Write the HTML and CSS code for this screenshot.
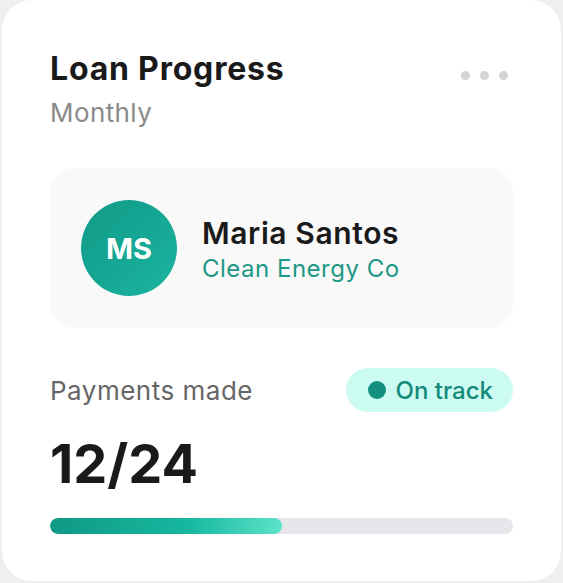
FILE: index.html
```html
<!DOCTYPE html>
<html lang="en">
<head>
  <meta charset="UTF-8">
  <title>Loan Progress</title>
  <link rel="stylesheet" href="styles.css">
</head>
<body>

  <div class="card">
    <div class="card-header">
      <div>
        <h2 class="title">Loan Progress</h2>
        <div class="subtitle">Monthly</div>
      </div>
      <button class="more" aria-label="More options">
        <span></span><span></span><span></span>
      </button>
    </div>

    <div class="borrower">
      <div class="avatar">MS</div>
      <div class="borrower-info">
        <div class="borrower-name">Maria Santos</div>
        <div class="borrower-company">Clean Energy Co</div>
      </div>
    </div>

    <div class="payments-row">
      <span class="payments-label">Payments made</span>
      <span class="badge"><span class="badge-dot"></span>On track</span>
    </div>

    <div class="payments-count">12/24</div>

    <div class="progress">
      <div class="progress-fill" style="width: 50%"></div>
    </div>
  </div>

</body>
</html>
```

FILE: styles.css
```css
body {
  font-family: 'Inter', 'Noto Sans', sans-serif;
  background: #efefef;
  margin: 0;
  padding: 0 2px;
  color: #1a1a1a;
}

.card {
  box-sizing: border-box;
  height: 581px;
  background: #ffffff;
  border-radius: 30px;
  padding: 51px 48px 0;
  display: flex;
  flex-direction: column;
}

.card-header {
  display: flex;
  justify-content: space-between;
  align-items: flex-start;
}

.title {
  margin: 0;
  font-size: 32px;
  line-height: 36px;
  font-weight: 700;
  letter-spacing: 0.8px;
  color: #1a1a1a;
}

.subtitle {
  margin-top: 11px;
  font-size: 26px;
  line-height: 30px;
  letter-spacing: 0.4px;
  color: #8a8a8a;
}

.more {
  display: flex;
  gap: 10px;
  background: none;
  border: none;
  padding: 0;
  margin: 20px 5px 0 0;
  cursor: pointer;
}

.more span {
  width: 9px;
  height: 9px;
  border-radius: 50%;
  background: #d4d4d4;
}

.borrower {
  margin-top: 40px;
  display: flex;
  align-items: center;
  gap: 25px;
  padding: 32px 31px;
  background: #f9f9f9;
  border-radius: 24px;
}

.avatar {
  width: 96px;
  height: 96px;
  border-radius: 50%;
  background: linear-gradient(135deg, #109a87, #1bb4a1);
  color: #ffffff;
  font-size: 29px;
  font-weight: 700;
  display: flex;
  align-items: center;
  justify-content: center;
  flex-shrink: 0;
}

.borrower-info {
  margin-top: 3px;
}

.borrower-name {
  font-size: 30px;
  line-height: 34px;
  font-weight: 600;
  letter-spacing: 0.6px;
  color: #1a1a1a;
}

.borrower-company {
  margin-top: 4px;
  font-size: 24px;
  line-height: 30px;
  letter-spacing: 0.5px;
  color: #1c9885;
}

.payments-row {
  margin-top: 40px;
  display: flex;
  justify-content: space-between;
  align-items: center;
}

.payments-label {
  font-size: 26px;
  letter-spacing: 0.5px;
  color: #666666;
}

.badge {
  display: flex;
  align-items: center;
  gap: 10px;
  height: 44px;
  padding: 0 20px 0 22px;
  border-radius: 22px;
  background: #ccfbf1;
  color: #138a7a;
  font-size: 24px;
  font-weight: 500;
}

.badge-dot {
  width: 18px;
  height: 18px;
  border-radius: 50%;
  background: #13907f;
}

.payments-count {
  margin-top: 22px;
  font-size: 54px;
  line-height: 60px;
  font-weight: 700;
  color: #1a1a1a;
}

.progress {
  margin-top: 24px;
  height: 16px;
  border-radius: 8px;
  background: #e5e7eb;
  overflow: hidden;
}

.progress-fill {
  height: 100%;
  border-radius: 8px;
  background: linear-gradient(90deg, #0f9984, #17b8a0 60%, #5ce3c9);
}
```
